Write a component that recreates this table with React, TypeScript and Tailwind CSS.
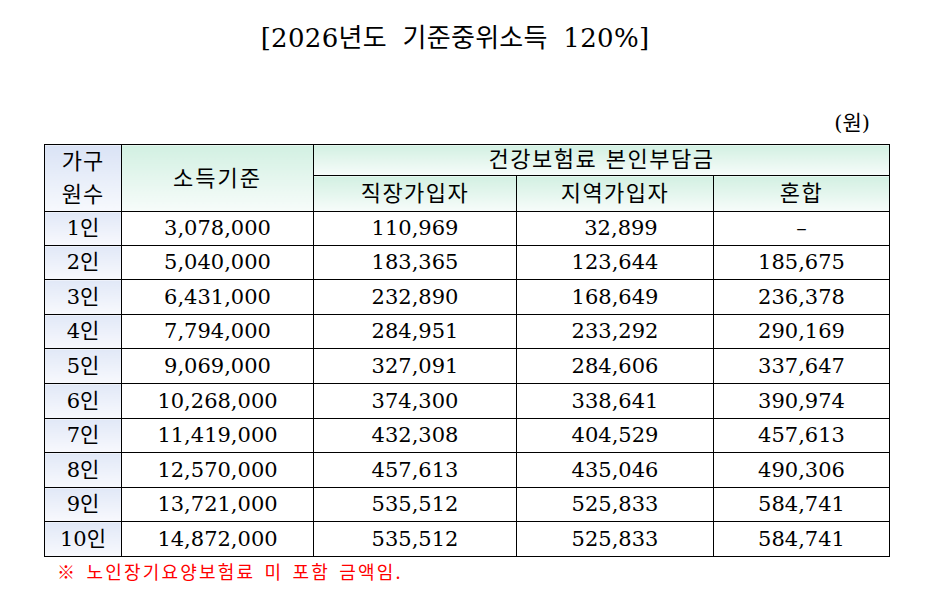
import React from "react";

const rows: [string, string, string, string, string][] = [
  ["1인", "3,078,000", "110,969", "32,899", "–"],
  ["2인", "5,040,000", "183,365", "123,644", "185,675"],
  ["3인", "6,431,000", "232,890", "168,649", "236,378"],
  ["4인", "7,794,000", "284,951", "233,292", "290,169"],
  ["5인", "9,069,000", "327,091", "284,606", "337,647"],
  ["6인", "10,268,000", "374,300", "338,641", "390,974"],
  ["7인", "11,419,000", "432,308", "404,529", "457,613"],
  ["8인", "12,570,000", "457,613", "435,046", "490,306"],
  ["9인", "13,721,000", "535,512", "525,833", "584,741"],
  ["10인", "14,872,000", "535,512", "525,833", "584,741"],
];

const heights = ["h-[34px]", "h-[34px]", "h-[35px]", "h-[34px]", "h-[35px]", "h-[35px]", "h-[34px]", "h-[35px]", "h-[34px]", "h-[35px]"];

export default function App() {
  return (
    <div
      className="w-[945px] h-[607px] bg-white text-black overflow-hidden"
      style={{ fontFamily: "'DejaVu Serif', 'Noto Sans CJK KR', serif" }}
    >
      <div className="ml-[44px] w-[844px] pr-[22px] pt-[21px] text-center text-[26px] leading-[34px] tracking-[0.3px] [word-spacing:7px]">
        [2026년도 기준중위소득 120%]
      </div>
      <div className="ml-[44px] w-[844px] mt-[58px] mb-[10px] pr-[18px] text-right text-[21px] leading-[21px]">
        (원)
      </div>
      <table className="ml-[44px] w-[845px] table-fixed border-collapse text-[21px]">
        <colgroup>
          <col className="w-[77px]" />
          <col className="w-[192px]" />
          <col className="w-[203px]" />
          <col className="w-[197px]" />
          <col className="w-[176px]" />
        </colgroup>
        <thead>
          <tr className="h-[31px]">
            <th
              rowSpan={2}
              className="border border-black font-normal leading-[33px] bg-gradient-to-b from-[#dae3f5] to-[#f7f9fd] text-[22px] tracking-[1px]"
            >
              가구
              <br />
              원수
            </th>
            <th
              rowSpan={2}
              className="border border-black font-normal text-[22px] tracking-[2px] bg-gradient-to-b from-[#d2f0e2] to-[#f7fcfa]"
            >
              소득기준
            </th>
            <th
              colSpan={3}
              className="border border-black font-normal text-[22px] tracking-[1.5px] leading-[28px] bg-gradient-to-b from-[#d2f0e2] to-[#f7fcfa]"
            >
              건강보험료 본인부담금
            </th>
          </tr>
          <tr className="h-[36px]">
            <th className="border border-black font-normal text-[22px] tracking-[1.5px] bg-gradient-to-b from-[#d2f0e2] to-[#f7fcfa]">
              직장가입자
            </th>
            <th className="border border-black font-normal text-[22px] tracking-[1.5px] bg-gradient-to-b from-[#d2f0e2] to-[#f7fcfa]">
              지역가입자
            </th>
            <th className="border border-black font-normal text-[22px] tracking-[1.5px] bg-gradient-to-b from-[#d2f0e2] to-[#f7fcfa]">
              혼합
            </th>
          </tr>
        </thead>
        <tbody>
          {rows.map((r, i) => (
            <tr key={r[0]} className={heights[i]}>
              <td className="border border-black text-center leading-none bg-gradient-to-b from-[#e1e8f7] to-[#f8f9fd]">
                {r[0]}
              </td>
              <td className="border border-black text-center leading-none">{r[1]}</td>
              <td className="border border-black text-center leading-none">{r[2]}</td>
              <td className={`border border-black text-center leading-none ${i === 0 ? "pl-3" : ""}`}>{r[3]}</td>
              <td className="border border-black text-center leading-none">{r[4]}</td>
            </tr>
          ))}
        </tbody>
      </table>
      <div
        className="ml-[57px] mt-[4px] text-[18px] leading-[20px] tracking-[2.2px] text-[#ff0000] [word-spacing:3px]"
        style={{ fontFamily: "'Noto Sans CJK KR', sans-serif" }}
      >
        ※ 노인장기요양보험료 미 포함 금액임.
      </div>
    </div>
  );
}
